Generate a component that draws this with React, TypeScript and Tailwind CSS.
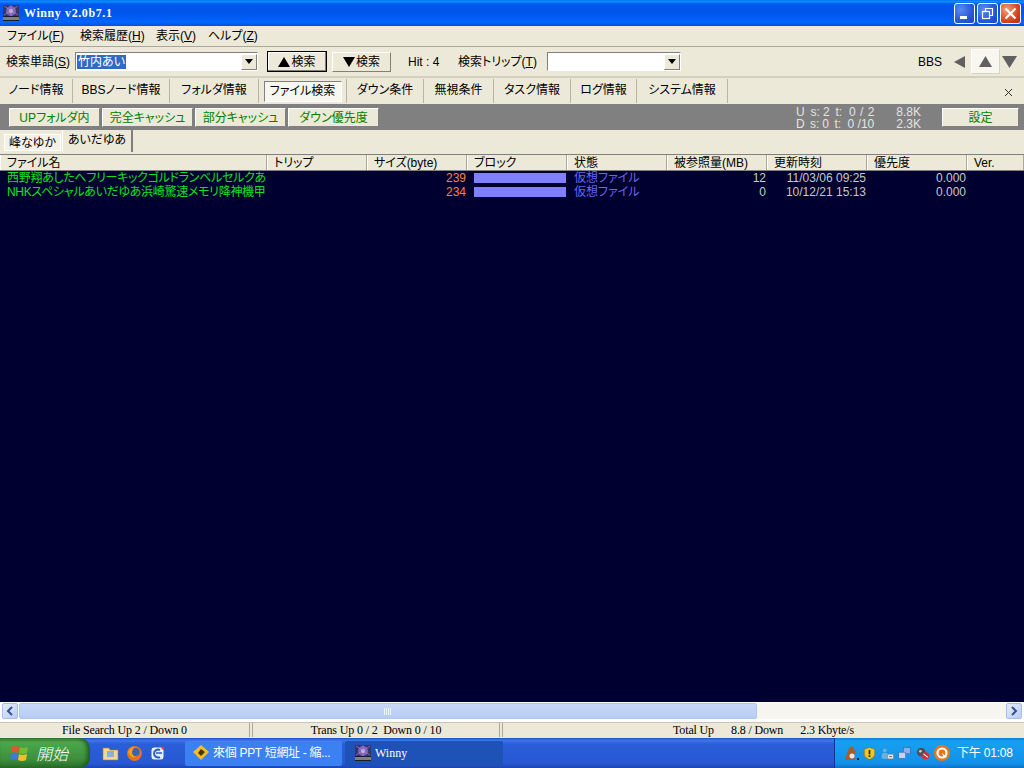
import React from 'react'

const tabs = [
  { label: 'ノード情報', cls: 'w-[73px]' },
  { label: 'BBSノード情報', cls: 'w-[97px]' },
  { label: 'フォルダ情報', cls: 'w-[89px]' },
  { label: 'ファイル検索', cls: 'w-[88px]', active: true },
  { label: 'ダウン条件', cls: 'w-[77px]' },
  { label: '無視条件', cls: 'w-[70px]' },
  { label: 'タスク情報', cls: 'w-[77px]' },
  { label: 'ログ情報', cls: 'w-[66px]' },
  { label: 'システム情報', cls: 'w-[91px]' },
]

const filters = ['UPフォルダ内', '完全キャッシュ', '部分キャッシュ', 'ダウン優先度']

const columns = ['ファイル名', 'トリップ', 'サイズ(byte)', 'ブロック', '状態', '被参照量(MB)', '更新時刻', '優先度', 'Ver.']

const rows = [
  { name: '西野翔あしたへフリーキックゴルドランベルセルクあ', size: '239', refs: '12', date: '11/03/06 09:25' },
  { name: 'NHKスペシャルあいだゆあ浜崎驚速メモリ降神機甲', size: '234', refs: '0', date: '10/12/21 15:13' },
]

const raised = 'border border-t-white border-l-white border-r-[#808080] border-b-[#808080] bg-[#ece9d8]'
const gridCols = 'grid grid-cols-[267px_100px_100px_100px_100px_100px_100px_100px_1fr]'

function WinnyIcon({ size = 16 }: { size?: number }) {
  return (
    <svg width={size} height={size} viewBox="0 0 16 16" className="shrink-0">
      <rect width="16" height="16" fill="#34346e" />
      <circle cx="8" cy="6" r="5" fill="#7a64b8" />
      <circle cx="8" cy="6" r="2" fill="#d8c4e8" />
      <path d="M1 1l14 9M15 1L1 10M8 0v11" stroke="#b48cd4" strokeWidth="0.6" />
      <rect y="11" width="16" height="5" fill="#1c1c28" />
      <path d="M1 12v3M3 12v3M5 12v3M7 12v3M9 12v3M11 12v3M13 12v3M15 12v3" stroke="#e0e0e0" strokeWidth="1" />
    </svg>
  )
}

function WinButton({ kind }: { kind: 'min' | 'max' | 'close' }) {
  const bg = kind === 'close'
    ? 'bg-[radial-gradient(circle_at_30%_30%,#f0a080,#d8431c_60%,#b02c08)]'
    : 'bg-[radial-gradient(circle_at_30%_30%,#5b8cf0,#2458d8_60%,#1c44c0)]'
  return (
    <div className={`w-[21px] h-[21px] rounded-[3px] border border-white ${bg} flex items-center justify-center`}>
      <svg width="15" height="15" viewBox="0 0 15 15">
        {kind === 'min' && <rect x="3" y="10" width="7" height="3" fill="#fff" />}
        {kind === 'max' && (
          <g fill="none" stroke="#fff" strokeWidth="1.2">
            <rect x="2.5" y="5.5" width="7" height="7" />
            <path d="M5.5 5V2.5h7v7H10" />
          </g>
        )}
        {kind === 'close' && <path d="M2.5 2.5l10 10M12.5 2.5l-10 10" stroke="#fff" strokeWidth="2.2" />}
      </svg>
    </div>
  )
}

function Combo({ width, children }: { width: string; children?: React.ReactNode }) {
  return (
    <div className={`${width} h-[19px] shrink-0 bg-white border border-t-[#808080] border-l-[#808080] border-b-white border-r-white flex items-center`}>
      <div className="flex-1 pl-[1px] overflow-hidden">{children}</div>
      <div className={`w-[16px] h-[16px] ${raised} flex items-center justify-center`}>
        <svg width="8" height="5" viewBox="0 0 8 5"><path d="M0 0h8L4 5z" fill="#000" /></svg>
      </div>
    </div>
  )
}

function Start() {
  return (
    <div className="w-[90px] h-full rounded-r-[10px] bg-[linear-gradient(#3c8f3c,#4aa84a_15%,#3d8f3d_70%,#2c6f2c)] flex items-center pl-[10px] gap-[6px] shadow-[inset_-3px_0_4px_#1f5a1f]">
      <svg width="20" height="18" viewBox="0 0 20 18">
        <path d="M2 3q3-2 7 0l-1 6q-4-2-7 0z" fill="#e8542a" />
        <path d="M10 3q3 2 8 0l-1 6q-4 2-8 0z" fill="#7ab82e" />
        <path d="M1 10q3-2 7 0l-1 6q-4-2-7 0z" fill="#3d7ae0" />
        <path d="M9 10q3 2 8 0l-1 6q-4 2-8 0z" fill="#f4c020" />
      </svg>
      <span className="italic font-light text-[16px] text-white leading-none [font-family:'Noto_Sans_CJK_TC',sans-serif]">開始</span>
    </div>
  )
}

function QuickLaunch() {
  return (
    <div className="flex items-center ml-[12px] gap-[7px] w-[81px]">
      <svg width="17" height="16" viewBox="0 0 17 16">
        <path d="M1 3h6l1 2h8v10H1z" fill="#f0d890" stroke="#a08040" strokeWidth="0.6" />
        <rect x="5" y="6" width="7" height="6" fill="#8ab0e0" />
      </svg>
      <svg width="17" height="17" viewBox="0 0 17 17">
        <circle cx="8.5" cy="8.5" r="7.5" fill="#e8701c" />
        <circle cx="9.5" cy="7" r="4" fill="#3a64b0" />
        <path d="M2 7q2-5 7-5-3 2-3 5 0 4 4 5-5 2-8-5z" fill="#f4a020" />
      </svg>
      <svg width="16" height="16" viewBox="0 0 16 16">
        <rect x="1" y="2" width="13" height="13" rx="3" fill="#e8f0fc" stroke="#2860c0" />
        <path d="M10 5a4 4 0 1 0 0 7" stroke="#2860c0" strokeWidth="2" fill="none" />
        <path d="M6 8h6" stroke="#2860c0" strokeWidth="1.5" />
        <circle cx="13" cy="3" r="1.5" fill="#d04040" />
      </svg>
    </div>
  )
}

function TrayIcons() {
  return (
    <div className="flex items-center">
      <svg width="17" height="16" viewBox="0 0 17 16">
        <path d="M2 15L6 3l4-2 1 4 3 2-3 2 1 6z" fill="#a85c28" />
        <circle cx="9" cy="11" r="2.5" fill="#e8e8e8" />
        <rect x="14" y="13" width="2" height="2" fill="#101020" />
      </svg>
      <svg width="13" height="15" viewBox="0 0 15 16" className="ml-[3px]">
        <path d="M7.5 1l6 2v6q0 4-6 6-6-2-6-6V3z" fill="#f0c820" stroke="#806810" strokeWidth="0.6" />
        <rect x="6.5" y="4" width="2" height="5" fill="#302808" />
        <rect x="6.5" y="10" width="2" height="2" fill="#302808" />
      </svg>
      <svg width="13" height="15" viewBox="0 0 17 16" className="ml-[5px]">
        <circle cx="5" cy="4" r="2.5" fill="#70b0d8" />
        <path d="M1 15V9q0-2 4-2t4 2v6z" fill="#70b0d8" />
        <rect x="9" y="9" width="7" height="6" fill="#e8e8e8" stroke="#808080" strokeWidth="0.5" />
        <rect x="10.5" y="11.5" width="4" height="1" fill="#505050" />
      </svg>
      <svg width="13" height="14" viewBox="0 0 17 16" className="ml-[4px]">
        <rect x="7" y="1" width="9" height="8" fill="#88b0ec" stroke="#385ca8" strokeWidth="0.7" />
        <rect x="1" y="7" width="9" height="8" fill="#c0d4f4" stroke="#385ca8" strokeWidth="0.7" />
      </svg>
      <svg width="14" height="14" viewBox="0 0 16 16" className="ml-[5px]">
        <circle cx="6" cy="7" r="5" fill="#505058" />
        <circle cx="5" cy="6" r="1.5" fill="#d0d0d0" />
        <circle cx="11" cy="11" r="4" fill="#e02828" />
        <path d="M8.5 9l5 4" stroke="#fff" strokeWidth="1.2" />
      </svg>
      <svg width="16" height="16" viewBox="0 0 16 16" className="ml-[4px]">
        <circle cx="8" cy="8" r="8" fill="#e8741c" />
        <circle cx="8" cy="8" r="4.5" fill="none" stroke="#fff" strokeWidth="2.2" />
        <path d="M8 8l5 4-3 1z" fill="#fff" />
      </svg>
    </div>
  )
}

function App() {
  return (
    <div className="w-[1024px] h-[768px] flex flex-col overflow-hidden bg-[#ece9d8] text-[12px] leading-none text-black [font-family:'Liberation_Sans','Noto_Sans_CJK_JP',sans-serif] [font-feature-settings:'palt']">
      {/* title bar */}
      <div className="h-[26px] shrink-0 flex items-center pl-[3px] pr-[3px] bg-[linear-gradient(#0a5ce8,#0a97ff_4%,#0058ee_16%,#0054e9_50%,#0066ff_85%,#0050d8)]">
        <WinnyIcon />
        <span className="ml-[5px] font-bold text-white text-[12px] tracking-[0.6px] [font-family:'Liberation_Serif',serif]">Winny v2.0b7.1</span>
        <div className="ml-auto flex gap-[2px]">
          <WinButton kind="min" />
          <WinButton kind="max" />
          <WinButton kind="close" />
        </div>
      </div>

      {/* menu */}
      <div className="h-[20px] shrink-0 flex items-center pl-[7px]">
        <span className="w-[73px]">ファイル(<u>F</u>)</span>
        <span className="w-[76px]">検索履歴(<u>H</u>)</span>
        <span className="w-[52px]">表示(<u>V</u>)</span>
        <span>ヘルプ(<u>Z</u>)</span>
      </div>

      {/* search toolbar */}
      <div className="h-[32px] shrink-0 flex items-center border-t border-t-[#aca899] border-b-2 border-b-[#d4d0c0] pl-[6px]">
        <span className="w-[69px] shrink-0">検索単語(<u>S</u>)</span>
        <Combo width="w-[183px]">
          <span className="bg-[#316ac5] text-white inline-block px-[1px] py-[1px]">竹内あい</span>
        </Combo>
        <button className="ml-[9px] w-[60px] h-[21px] border border-black shadow-[inset_-1px_-1px_#808080,inset_1px_1px_#fff] bg-[#ece9d8] flex items-center justify-center gap-[1px]">
          <svg width="12" height="10" viewBox="0 0 12 10"><path d="M6 0l6 10H0z" fill="#000" /></svg>
          <span>検索</span>
        </button>
        <button className={`ml-[5px] w-[59px] h-[20px] ${raised} flex items-center justify-center gap-[1px]`}>
          <svg width="12" height="10" viewBox="0 0 12 10"><path d="M0 0h12L6 10z" fill="#000" /></svg>
          <span>検索</span>
        </button>
        <span className="ml-[17px] w-[50px] shrink-0">Hit : 4</span>
        <span className="w-[89px] shrink-0">検索トリップ(<u>T</u>)</span>
        <Combo width="w-[134px]" />
        <span className="ml-auto">BBS</span>
        <svg width="12" height="12" viewBox="0 0 12 12" className="ml-[12px]"><path d="M11 0v12L0 6z" fill="#606060" /></svg>
        <div className="ml-[5px] w-[29px] h-[25px] bg-[#f7f6ef] border border-t-white border-l-white border-r-[#d8d4c4] border-b-[#d8d4c4] flex items-center justify-center">
          <svg width="13" height="11" viewBox="0 0 13 11"><path d="M6.5 0L13 11H0z" fill="#606060" /></svg>
        </div>
        <svg width="15" height="12" viewBox="0 0 15 12" className="ml-[2px] mr-[7px]"><path d="M0 0h15L7.5 12z" fill="#606060" /></svg>
      </div>

      {/* main tabs */}
      <div className="h-[26px] shrink-0 flex items-start pt-[1px]">
        {tabs.map(t => (
          <div key={t.label} className={`${t.cls} h-[24px] shrink-0 flex items-center justify-center border-r border-r-[#b8b4a4]`}>
            {t.active
              ? <span className="w-[78px] justify-center h-[21px] flex items-center bg-[#f7f6ef] border border-t-[#808080] border-l-[#808080] border-r-white border-b-white">{t.label}</span>
              : <span className="pb-[2px]">{t.label}</span>}
          </div>
        ))}
        <svg width="9" height="9" viewBox="0 0 9 9" className="ml-auto mr-[11px] mt-[9px]"><path d="M1 1l7 7M8 1L1 8" stroke="#303030" strokeWidth="1" /></svg>
      </div>

      {/* filter bar */}
      <div className="h-[26px] shrink-0 bg-[#808080] flex items-center pl-[9px] pr-[5px] gap-[2px]">
        {filters.map(f => (
          <button key={f} className={`w-[91px] h-[19px] mt-[1px] ${raised} text-[#008000]`}>{f}</button>
        ))}
        <div className="ml-auto flex flex-col text-[#e4e4e4] leading-[12px] mr-[19px] mt-[1px] w-[125px]">
          <div className="flex">
            <span className="w-[15px]">U</span><span className="w-[13px]">s:</span><span className="w-[13px]">2</span>
            <span className="w-[14px]">t:</span><span className="w-[49px] tracking-[0.5px]">0 / 2</span><span>8.8K</span>
          </div>
          <div className="flex">
            <span className="w-[15px]">D</span><span className="w-[13px]">s:</span><span className="w-[13px]">0</span>
            <span className="w-[14px]">t:</span><span className="w-[52px]">0 /10</span><span>2.3K</span>
          </div>
        </div>
        <button className={`w-[77px] h-[19px] mt-[1px] ${raised} text-[#008000]`}>設定</button>
      </div>

      {/* keyword tabs */}
      <div className="h-[24px] shrink-0 flex items-start pl-[4px]">
        <div className="w-[57px] h-[17px] shrink-0 mt-[4px] bg-[#f4f2e8] border border-white flex items-center justify-center">峰なゆか</div>
        <div className="w-[71px] h-[22px] pt-[4px] ml-[1px] border-l border-l-white border-r-2 border-r-[#808080] flex justify-center">
          <span>あいだゆあ</span>
        </div>
      </div>

      {/* list header */}
      <div className={`${gridCols} h-[17px] shrink-0 border-t border-t-[#808080] border-b border-b-[#808080]`}>
        {columns.map(c => (
          <div key={c} className="pl-[6px] flex items-center border-l border-l-white border-r border-r-[#aca899] overflow-hidden whitespace-nowrap">{c}</div>
        ))}
      </div>

      {/* list body */}
      <div className="flex-1 bg-[#000030] overflow-hidden">
        {rows.map(r => (
          <div key={r.name} className={`${gridCols} h-[14px] items-center whitespace-nowrap`}>
            <div className="pl-[7px] text-[#10e020] tracking-[-0.3px]">{r.name}</div>
            <div />
            <div className="text-right pr-[1px] text-[#ff8040]">{r.size}</div>
            <div className="pl-[7px] pr-[1px]"><div className="h-[10px] bg-[#8080ff]" /></div>
            <div className="pl-[7px] text-[#6868f0]">仮想ファイル</div>
            <div className="text-right pr-[1px] text-[#c8c8c8]">{r.refs}</div>
            <div className="text-right pr-[1px] text-[#c8c8c8]">{r.date}</div>
            <div className="text-right pr-[1px] text-[#c8c8c8]">0.000</div>
            <div />
          </div>
        ))}
      </div>

      {/* scrollbar */}
      <div className="h-[20px] shrink-0 bg-white flex items-start pt-[1px] px-[2px]">
        <div className="w-[16px] h-[16px] rounded-[2px] bg-[linear-gradient(135deg,#e4ecfc,#b8ccf4)] border border-[#a8bce8] flex items-center justify-center">
          <svg width="8" height="10" viewBox="0 0 8 10"><path d="M6 1L2 5l4 4" stroke="#35508c" strokeWidth="2" fill="none" /></svg>
        </div>
        <div className="w-[738px] h-[16px] ml-[1px] rounded-[2px] bg-[linear-gradient(#c8d8f8,#c0d2f6_50%,#b8ccf4)] border border-[#b0c4ec] flex items-center justify-center">
          <svg width="8" height="7" viewBox="0 0 8 7"><path d="M0.5 0v7M2.5 0v7M4.5 0v7M6.5 0v7" stroke="#eef3fe" strokeWidth="1" /></svg>
        </div>
        <div className="flex-1 h-[16px] bg-[#f6f5f0]" />
        <div className="w-[16px] h-[16px] rounded-[2px] bg-[linear-gradient(135deg,#e4ecfc,#b8ccf4)] border border-[#a8bce8] flex items-center justify-center">
          <svg width="8" height="10" viewBox="0 0 8 10"><path d="M2 1l4 4-4 4" stroke="#35508c" strokeWidth="2" fill="none" /></svg>
        </div>
      </div>

      {/* status bar */}
      <div className="h-[16px] shrink-0 flex gap-[2px] pb-[1px] tracking-[-0.15px] [font-family:'Liberation_Serif',serif] border-t border-t-[#c8c4b4]">
        <div className="w-[250px] flex items-center justify-center border-r border-r-[#aca899]">File Search Up 2 / Down 0</div>
        <div className="w-[248px] flex items-center justify-center border-l border-l-[#aca899] border-r border-r-[#aca899]">Trans Up 0 / 2&nbsp;&nbsp;Down 0 / 10</div>
        <div className="flex-1 flex items-center justify-center whitespace-pre border-l border-l-[#aca899]">Total Up      8.8 / Down      2.3 Kbyte/s</div>
      </div>

      {/* taskbar */}
      <div className="h-[30px] shrink-0 flex items-center bg-[linear-gradient(#1f4fc8,#3a78e8_8%,#2a5ed8_20%,#2858d4_85%,#1c44b0)] text-white [font-family:'Liberation_Sans','Noto_Sans_CJK_TC',sans-serif]">
        <Start />
        <QuickLaunch />
        <div className="w-[157px] h-[25px] ml-[2px] rounded-[2px] bg-[#3c81f3] flex items-center pl-[8px] gap-[3px]">
          <svg width="17" height="16" viewBox="0 0 17 16">
            <path d="M8 0l8 7-8 8-8-8z" fill="#f0c020" />
            <path d="M8 4l4 3-4 4-3-3z" fill="#503010" />
          </svg>
          <span className="whitespace-nowrap tracking-[-0.3px]">來個 PPT 短網址 - 縮...</span>
        </div>
        <div className="w-[158px] h-[25px] ml-[3px] rounded-[2px] bg-[#1e52b7] flex items-center pl-[10px] gap-[4px]">
          <WinnyIcon />
          <span className="[font-family:'Liberation_Serif',serif]">Winny</span>
        </div>
        <div className="ml-auto w-[190px] h-full bg-[linear-gradient(#0c7ed8,#18a0f0_10%,#1290e8_85%,#0c70c8)] border-l border-l-[#0a3a90] flex items-center pl-[8px]">
          <TrayIcons />
          <span className="ml-[7px] whitespace-nowrap tracking-[-0.2px]">下午 01:08</span>
        </div>
      </div>
    </div>
  )
}

export default App
